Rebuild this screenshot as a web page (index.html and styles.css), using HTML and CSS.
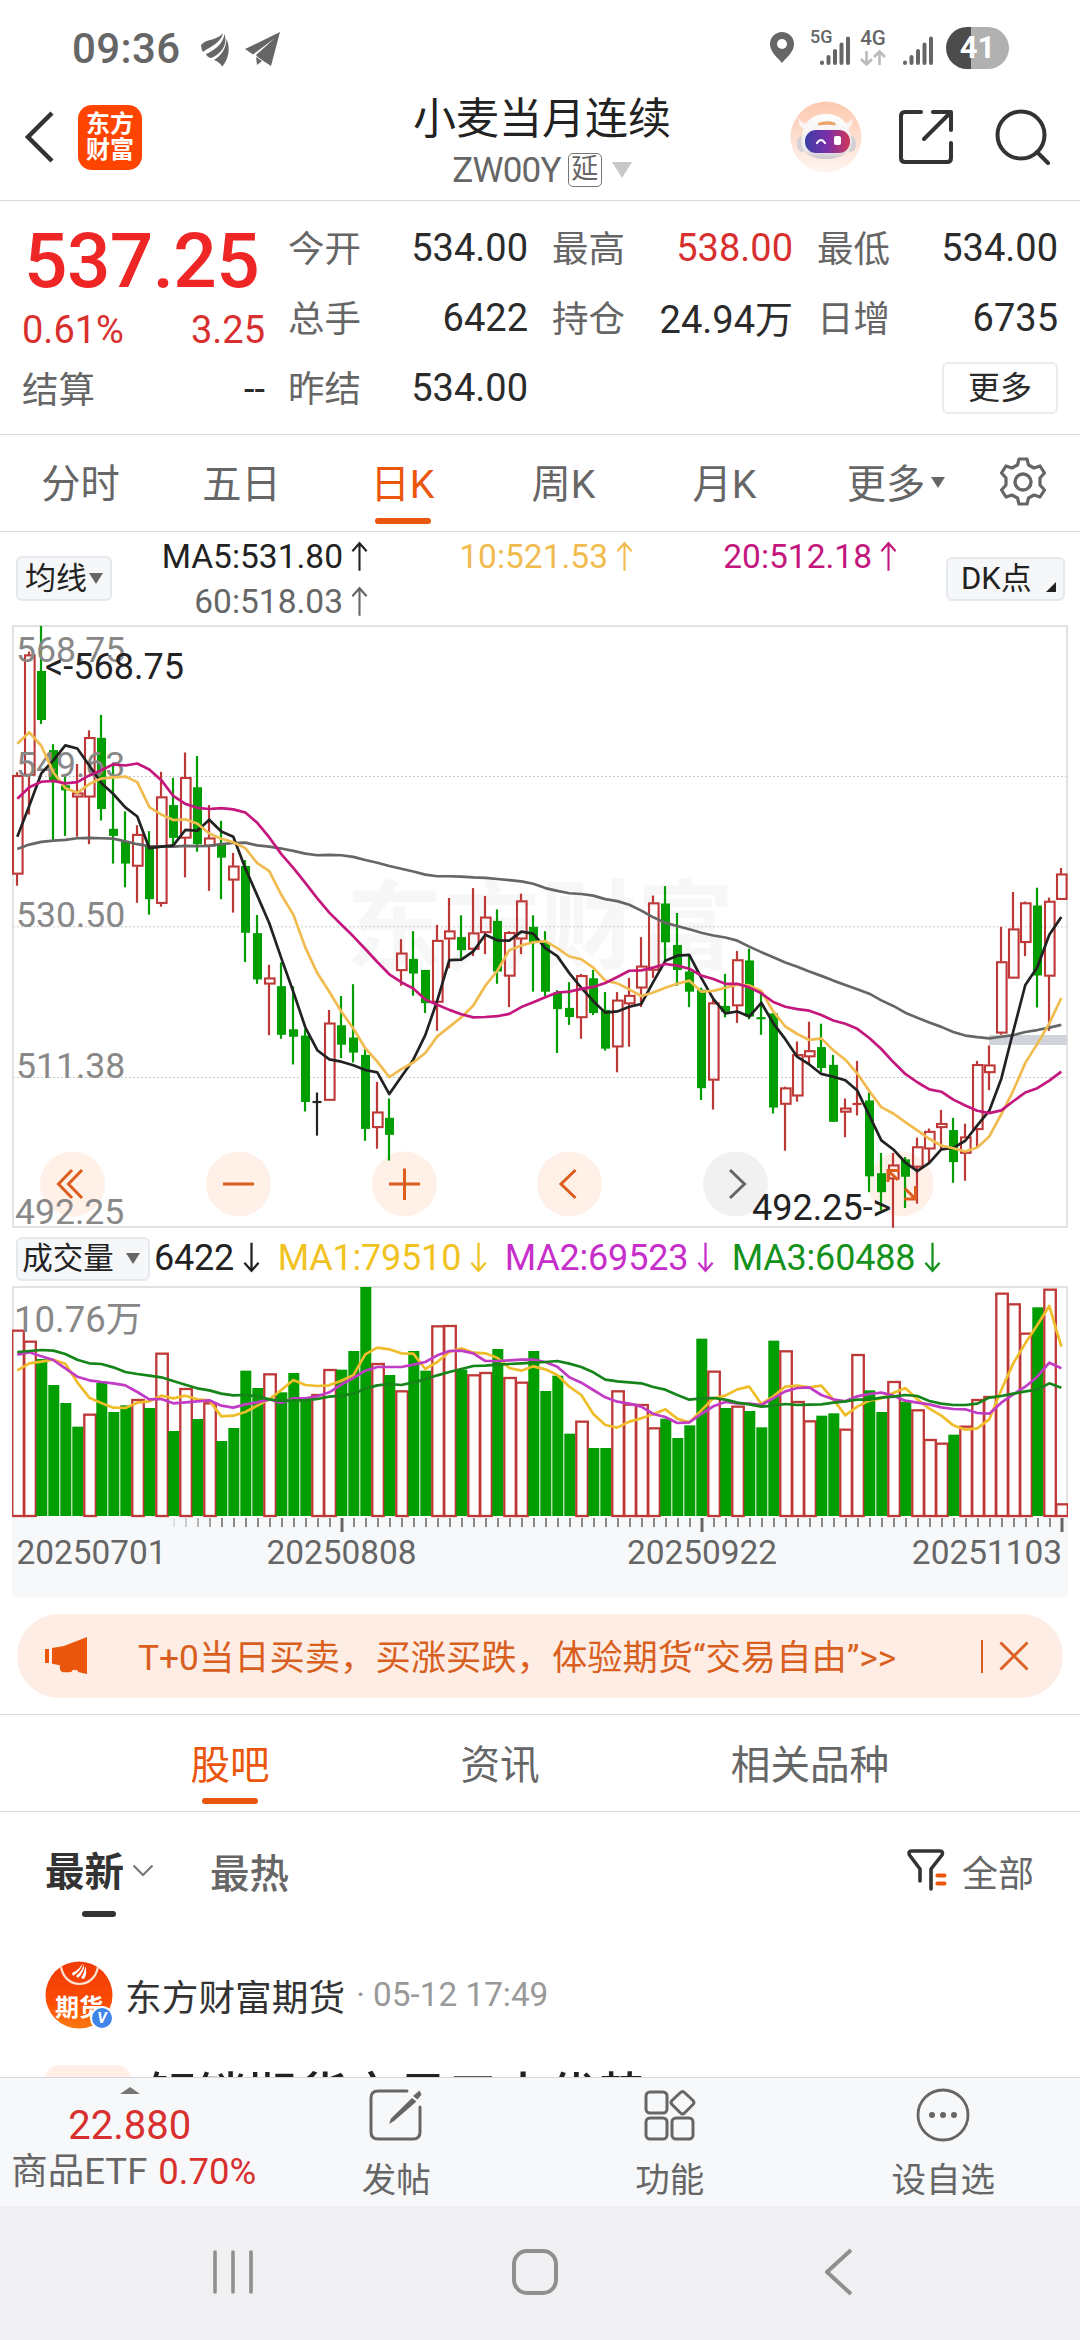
FILE: index.html
```html
<!DOCTYPE html>
<html lang="zh-CN">
<head>
<meta charset="utf-8">
<title>小麦当月连续 ZW00Y</title>
<link rel="stylesheet" href="styles.css">
</head>
<body>
<svg class="defs" width="0" height="0">
  <symbol id="up" viewBox="0 0 20 32"><path d="M10 31V2M2.5 10.500L10 2l7.500 8.500" fill="none" stroke="currentColor" stroke-width="2.200"/></symbol>
  <symbol id="down" viewBox="0 0 20 32"><path d="M10 0v29M2.500 21L10 29.500l7.500-8.500" fill="none" stroke="currentColor" stroke-width="2.400"/></symbol>
  <symbol id="signal" viewBox="0 0 32 30"><path d="M3 26.500v.5M9.500 21v6M16 15v12M22.500 8.500v18.500M29 2.500v24.500" fill="none" stroke="#666" stroke-width="4" stroke-linecap="round"/></symbol>
</svg>

<header class="status">
  <span class="clock">09:36</span>
  <svg class="st-wing" width="28" height="34" viewBox="0 0 28 34"><path d="M0 12C6 5 16 8 22 0C20 10 10 13 2 19Q0 16 0 12ZM5 21C14 17 22 11 23.500 1C27 12 20 21 10 25Q6 24 5 21ZM13 27C21 22 25 15 25.500 6C30 16 27 27 21 33.500Q19 29 13 27Z" fill="#666"/></svg>
  <svg class="st-plane" width="36" height="36" viewBox="0 0 36 36"><path d="M35 1L0 18l8 5.500L30 7L11 24l1.500 2L26 35ZM11 26l1 8 5-4Z" fill="#666"/></svg>
  <span class="grow"></span>
  <svg class="st-pin" width="26" height="32" viewBox="0 0 26 32"><path d="M13 0a12 12 0 0 1 12 12c0 8-8 14-12 19C9 26 1 20 1 12A12 12 0 0 1 13 0Zm0 7a5 5 0 1 0 0 10a5 5 0 0 0 0-10Z" fill="#666"/></svg>
  <span class="sim"><b class="g5">5G</b><svg width="32" height="30"><use href="#signal"/></svg></span>
  <span class="net"><b>4G</b><svg width="26" height="16" viewBox="0 0 26 16"><path d="M6.500 1v13M1 9l5.500 5.500L12 9M19.500 15V2M14 7l5.500-5.500L25 7" fill="none" stroke="#bbb" stroke-width="2.600"/></svg></span>
  <svg class="st-sig2" width="32" height="30"><use href="#signal"/></svg>
  <span class="battery">41</span>
</header>

<section class="head">
  <svg class="back" width="30" height="52" viewBox="0 0 30 52"><path d="M27 2L3 26l24 24" fill="none" stroke="#333" stroke-width="4.500"/></svg>
  <div class="logo"><span>东方</span><span>财富</span></div>
  <div class="titles">
    <h1>小麦当月连续</h1>
    <div class="code"><span>ZW00Y</span><i class="delay">延</i><i class="tri-pale"></i></div>
  </div>
  <svg class="robot" width="72" height="72" viewBox="0 0 72 72">
    <defs>
      <linearGradient id="rb" x1="0" y1="0" x2="0" y2="1"><stop offset="0" stop-color="#fcc9ae"/><stop offset=".55" stop-color="#fde0d2"/><stop offset="1" stop-color="#fff6f0"/></linearGradient>
      <linearGradient id="rf" x1="0" y1="0" x2="1" y2="0"><stop offset="0" stop-color="#3b3fa6"/><stop offset=".5" stop-color="#7a2fa8"/><stop offset="1" stop-color="#d0385a"/></linearGradient>
      <linearGradient id="rh" x1="0" y1="0" x2="0" y2="1"><stop offset="0" stop-color="#fff"/><stop offset=".8" stop-color="#ece8ea"/><stop offset="1" stop-color="#c9c4c8"/></linearGradient>
    </defs>
    <circle cx="36" cy="36" r="35.500" fill="url(#rb)"/>
    <path d="M9 17C8 24 11 28 18 30L24 20C17 24 11 23 9 17ZM62 17C63 24 60 28 54 30L47 20C54 24 60 23 62 17Z" fill="#fbf3f1"/>
    <ellipse cx="12" cy="43" rx="5" ry="8" fill="#d5d0d3"/><ellipse cx="61" cy="43" rx="5" ry="8" fill="#d5d0d3"/>
    <path d="M36 13C51 13 58 22 61 36C64 50 53 58 36 58S9 50 12 36C14 22 21 13 36 13Z" fill="url(#rh)"/>
    <path d="M28 22q8-3 17-.5l1 3q-9-1.500-18 0Z" fill="#e9a56a"/>
    <rect x="15" y="29" width="45" height="23" rx="11" fill="url(#rf)"/>
    <path d="M27 42q4-6 8 0" fill="none" stroke="#fff" stroke-width="2.200" stroke-linecap="round"/>
    <rect x="44" y="35" width="7" height="9" rx="2" fill="#fff"/>
  </svg>
  <svg class="share" width="54" height="56" viewBox="0 0 54 56"><path d="M22 3H6Q2 3 2 7V49Q2 53 6 53H48Q52 53 52 49V34M52 21V3H34M51 4L25 30" fill="none" stroke="#333" stroke-width="4" stroke-linecap="round" stroke-linejoin="round"/></svg>
  <svg class="search" width="56" height="56" viewBox="0 0 56 56"><circle cx="26" cy="26" r="23.500" fill="none" stroke="#333" stroke-width="4"/><path d="M42 43L53 54" stroke="#333" stroke-width="4" stroke-linecap="round"/></svg>
</section>

<section class="quote">
  <div class="main">
    <div class="price">537.25</div>
    <div class="pair red chg"><span>0.61%</span><span>3.25</span></div>
    <div class="pair settle"><span class="lab">结算</span><span>--</span></div>
  </div>
  <div class="grid">
    <div class="pair"><span class="lab">今开</span><span>534.00</span></div>
    <div class="pair"><span class="lab">最高</span><span class="red">538.00</span></div>
    <div class="pair"><span class="lab">最低</span><span>534.00</span></div>
    <div class="pair"><span class="lab">总手</span><span>6422</span></div>
    <div class="pair"><span class="lab">持仓</span><span class="wan">24.94万</span></div>
    <div class="pair"><span class="lab">日增</span><span>6735</span></div>
    <div class="pair"><span class="lab">昨结</span><span>534.00</span></div>
    <div></div>
    <div class="more-cell"><button class="more">更多</button></div>
  </div>
</section>

<nav class="periods">
  <span>分时</span><span>五日</span><span class="on">日K</span><span>周K</span><span>月K</span><span class="drop">更多<i class="tri"></i></span>
  <svg class="gear" width="48" height="50" viewBox="0 0 48 50"><path d="M20 2h8l1.500 6 5.500 3 6-2 4.500 7-4.500 5v7l4.500 5-4.500 7-6-2-5.500 3-1.500 6h-8l-1.500-6-5.500-3-6 2-4.500-7 4.500-5v-7l-4.500-5 4.500-7 6 2 5.500-3Z" fill="none" stroke="#666" stroke-width="3.200" stroke-linejoin="round"/><circle cx="24" cy="25" r="8" fill="none" stroke="#666" stroke-width="3.400"/></svg>
</nav>

<section class="ma">
  <button class="chip">均线<i class="tri"></i></button>
  <div class="ma-grid">
    <span class="c5">MA5:531.80<svg class="arr"><use href="#up"/></svg></span>
    <span class="c10">10:521.53<svg class="arr"><use href="#up"/></svg></span>
    <span class="c20">20:512.18<svg class="arr"><use href="#up"/></svg></span>
    <span class="c60">60:518.03<svg class="arr"><use href="#up"/></svg></span>
  </div>
  <button class="chip dk">DK点<i class="corner"></i></button>
</section>

<svg class="chart" id="price" width="1056" height="603" viewBox="12 625 1056 603">
  <text x="346" y="961" class="wm">东方财富</text>
  <g fill="none" stroke="#c9c9c9" stroke-dasharray="2 2"><path d="M13 776.500H1067M13 926.800H1067M13 1077.500H1067"/></g>
  <rect x="13" y="626" width="1054" height="601" fill="none" stroke="#e2e2e2" stroke-width="2"/>
  <rect x="989" y="1035" width="78" height="10" fill="#d0d3d9"/>
  <g class="pads">
    <circle cx="72.500" cy="1184" r="32.500"/><circle cx="238.500" cy="1184" r="32.500"/><circle cx="404.500" cy="1184" r="32.500"/><circle cx="569.500" cy="1184" r="32.500"/><circle cx="735.500" cy="1184" r="32.500" class="off"/><circle cx="901" cy="1184" r="32.500"/>
  </g>
  <g id="candles"></g>
  <g class="axis"><text x="16" y="661.500">568.75</text><text x="16" y="777">549.63</text><text x="16" y="927">530.50</text><text x="16" y="1078">511.38</text><text x="15" y="1224">492.25</text></g>
  <g id="averages"></g>
  <g class="mark"><text x="45" y="679">&lt;-568.75</text><text x="752" y="1220">492.25-&gt;</text></g>
  <g class="glyphs">
    <path d="M72 1170L58.500 1184L72 1198M82 1170L68.500 1184L82 1198"/><path d="M223 1184H254"/><path d="M389 1184H420M404.500 1168.500V1200"/><path d="M575.500 1170L561 1184L575.500 1198"/><path class="off" d="M730 1170L744.500 1184L730 1198"/>
    <path d="M888 1182V1170.500H899M888.500 1171L898 1180M904 1199H915.500V1186M905 1188.500L915 1198.500"/>
  </g>
</svg>

<section class="vol-head">
  <button class="chip vol">成交量<i class="tri"></i></button>
  <span class="v0">6422<svg class="arr"><use href="#down"/></svg></span>
  <span class="v1">MA1:79510<svg class="arr"><use href="#down"/></svg></span>
  <span class="v2">MA2:69523<svg class="arr"><use href="#down"/></svg></span>
  <span class="v3">MA3:60488<svg class="arr"><use href="#down"/></svg></span>
</section>

<svg class="chart" id="volume" width="1056" height="311" viewBox="12 1286 1056 311">
  <rect x="12" y="1517" width="1056" height="80" fill="#f7f8fa"/>
  <path d="M13 1517V1287H1067V1517" fill="none" stroke="#e2e2e2" stroke-width="2"/>
  <g id="bars"></g>
  <g class="axis"><text class="peak" x="14" y="1332">10.76万</text></g>
  <g id="vol-averages"></g>
  <g id="ticks" fill="none" stroke="#8a8a8a" stroke-width="2"></g>
  <g class="dates"><text x="16.500" y="1563.500">20250701</text><text x="341.500" y="1563.500" text-anchor="middle">20250808</text><text x="702" y="1563.500" text-anchor="middle">20250922</text><text x="1062" y="1563.500" text-anchor="end">20251103</text></g>
</svg>

<section class="promo">
  <div class="banner">
    <svg width="44" height="38" viewBox="0 0 44 38"><path d="M1 12h4v14H1ZM8 11l12-2L43 0v37l-9-2v-1.500l-5-.8q-1 3-5 2.500h-5q-4-1-3-7l-8-1.500Z" fill="#e9560c"/></svg>
    <span>T+0当日买卖，买涨买跌，体验期货“交易自由”&gt;&gt;</span>
    <i class="bar"></i>
    <svg class="close" width="30" height="30" viewBox="0 0 30 30"><path d="M1.500 1.500L28.500 28.500M28.500 1.500L1.500 28.500" stroke="#dd6325" stroke-width="3"/></svg>
  </div>
</section>

<nav class="sections"><span class="on">股吧</span><span>资讯</span><span>相关品种</span></nav>

<main class="feed">
  <div class="sort">
    <span class="new">最新</span>
    <svg class="chev" width="22" height="13" viewBox="0 0 22 13"><path d="M1.500 1.500L11 11l9.500-9.500" fill="none" stroke="#777" stroke-width="2.200"/></svg>
    <span class="hot">最热</span>
    <span class="grow"></span>
    <svg class="filter" width="42" height="43" viewBox="0 0 42 43"><path d="M13 32V20L2.500 6Q1 2 4.500 2H33Q36.500 2 35 6L24 20V40" fill="none" stroke="#333" stroke-width="3.600" stroke-linecap="round" stroke-linejoin="round"/><path d="M30.500 26.500h7M30.500 34.500h7" stroke="#e9560c" stroke-width="4.200" stroke-linecap="round"/></svg>
    <span class="all">全部</span>
  </div>
  <div class="author">
    <div class="avatar">
      <svg width="68" height="68" viewBox="0 0 68 68"><defs><linearGradient id="av" x1="0" y1="0" x2="0" y2="1"><stop offset="0" stop-color="#f03a06"/><stop offset=".6" stop-color="#fb4b04"/><stop offset="1" stop-color="#f97a10"/></linearGradient></defs><circle cx="34" cy="34" r="33.500" fill="url(#av)"/><path d="M16 6C18 17 26 23 34.500 23S51 17 53 6" fill="none" stroke="#ffe2d4" stroke-width="2.200"/><path d="M27 12Q34 9 38 2Q36 10 28 15ZM31 15Q38 9 39 3Q40 10 33 17ZM36 17Q40 11 40 5Q43 12 39 18Z" fill="#fff"/></svg>
      <span>期货</span><b>V</b>
    </div>
    <span class="name">东方财富期货</span><span class="time">· 05-12 17:49</span>
  </div>
  <div class="post"><i class="tag"></i><span>解锁期货交易三大优势</span></div>
</main>

<footer class="tools">
  <div class="etf"><i class="tri-up"></i><span class="etf-v">22.880</span><span class="etf-n">商品ETF <em>0.70%</em></span></div>
  <div class="tool"><svg width="54" height="54" viewBox="0 0 54 54"><path d="M38 3H9Q2 3 2 10V44Q2 51 9 51H44Q51 51 51 44V19" fill="none" stroke="#666" stroke-width="3" stroke-linecap="round"/><path d="M50.500 2.500l2 4-4 5-4.500-3.500ZM43 10l4.500 3.500L25 33l-5 3 2-5.500Z" fill="#666"/></svg><span>发帖</span></div>
  <div class="tool"><svg width="54" height="54" viewBox="0 0 54 54"><g fill="none" stroke="#666" stroke-width="3"><rect x="3" y="4" width="21" height="21" rx="4"/><rect x="3" y="30" width="21" height="21" rx="4"/><rect x="29" y="30" width="21" height="21" rx="4"/><path d="M37.500 4.500Q39.500 2.500 41.500 4.500L50 12.500Q52 14.500 50 16.500L41.500 25Q39.500 27 37.500 25L29 16.500Q27 14.500 29 12.500Z"/></g></svg><span>功能</span></div>
  <div class="tool"><svg width="54" height="54" viewBox="0 0 54 54"><circle cx="27" cy="27" r="25" fill="none" stroke="#666" stroke-width="2.800"/><circle cx="16" cy="27" r="3" fill="#666"/><circle cx="27" cy="27" r="3" fill="#666"/><circle cx="38" cy="27" r="3" fill="#666"/></svg><span>设自选</span></div>
</footer>

<footer class="android">
  <svg width="44" height="44" viewBox="0 0 44 44"><path d="M4 2v40M22 2v40M40 2v40" stroke="#8f8f8f" stroke-width="3.600" stroke-linecap="round"/></svg>
  <svg width="48" height="48" viewBox="0 0 48 48"><rect x="3" y="3" width="42" height="42" rx="13" fill="none" stroke="#8f8f8f" stroke-width="4"/></svg>
  <svg width="32" height="48" viewBox="0 0 32 48"><path d="M28 2L4 24l24 22" fill="none" stroke="#8f8f8f" stroke-width="4" stroke-linejoin="round"/></svg>
</footer>
<script src="chart.js"></script>
</body>
</html>
```
FILE: styles.css
```css
* { box-sizing: border-box; margin: 0; padding: 0; }
body { width: 1080px; height: 2340px; overflow: hidden; background: #fff; color: #2b2b2b; font-family: Roboto, "Noto Sans CJK SC", sans-serif; display: flex; flex-direction: column; }
body > * { flex: none; }
svg { display: block; flex: none; }
i, em { font-style: normal; }
button { font: inherit; color: inherit; }
.defs { position: absolute; }
.grow { flex: 1; }
.red { color: #d8302f; }

.status { height: 96px; padding: 0 72px; display: flex; align-items: center; color: #666; }
.clock { font-size: 42px; font-weight: 500; letter-spacing: .4px; width: 108px; white-space: nowrap; }
.st-wing { margin: 4px 16px 0 21px; }
.st-plane { margin-top: 2px; }
.st-pin { margin-right: 15px; }
.sim { display: flex; width: 42px; height: 36px; align-items: flex-end; }
.sim .g5 { font-size: 18px; font-weight: 500; align-self: flex-start; margin: -4px -12px 0 0; width: 22px; }
.sim svg { margin-left: -1px; }
.net { display: flex; flex-direction: column; align-items: center; margin: -2px 16px 0 8px; width: 26px; gap: 2px; }
.net b { font-size: 20.500px; line-height: 19px; font-weight: 500; }
.st-sig2 { margin: 6px 12px 0 0; }
.battery { width: 63px; height: 42px; border-radius: 21px; background: linear-gradient(90deg, #4c4c4c 40%, #b0b0b0 40%); color: #fff; font: 700 31px/42px Roboto, sans-serif; text-align: center; margin-right: -1px; }

.head { height: 105px; border-bottom: 1.500px solid #d9d9d9; display: flex; align-items: center; padding-left: 25px; }
.back { margin-top: -22px; }
.logo { width: 64px; height: 65px; margin: -22px 0 0 23px; border-radius: 14px; background: #ff4400; color: #fff; font-weight: 700; font-size: 24px; line-height: 26px; display: flex; flex-direction: column; align-items: center; justify-content: center; }
.titles { width: 510px; margin: -16px 0 0 145px; display: flex; flex-direction: column; align-items: center; }
h1 { font-size: 43px; line-height: 54px; font-weight: 400; color: #222; }
.code { height: 36px; margin-top: 6px; display: flex; align-items: center; font-size: 35px; color: #666; letter-spacing: -.8px; }
.delay { width: 34px; height: 34px; border: 1.500px solid #777; border-radius: 5px; font-size: 27px; line-height: 30px; margin: -1px 10px 0 7px; letter-spacing: 0; text-align: center; }
.tri-pale { border: 10.500px solid transparent; border-top: 16px solid #c8c8c8; border-bottom: 0; }
.robot { margin: -22px 37px 0 -7px; }
.share { margin: -22px 42px 0 0; }
.search { margin-top: -22px; }

.quote { height: 234px; border-bottom: 1.500px solid #d9d9d9; display: flex; font-size: 38px; }
.main { margin-left: 22px; width: 243px; padding-top: 17px; }
.price { font-size: 76.500px; line-height: 86px; font-weight: 500; color: #ee2626; letter-spacing: -.6px; padding-left: 2px; }
.pair { display: flex; justify-content: space-between; align-items: center; white-space: nowrap; }
.chg { height: 52px; }
.settle { height: 66px; }
.lab { color: #666; font-size: 36.500px; margin-top: -3px; }
.wan { margin-top: -3px; }
.grid { display: grid; grid-template-columns: 240px 241px 241px; column-gap: 24px; grid-template-rows: repeat(3, 70px); margin: 12px 0 0 23px; }
.more-cell { display: flex; justify-content: flex-end; align-items: center; }
.more { width: 116px; height: 52px; border: 2px solid #e9ebed; border-radius: 6px; background: #fff; font-size: 32px; line-height: 44px; }

.periods { height: 97px; border-bottom: 1.500px solid #d9d9d9; display: flex; align-items: center; font-size: 39.300px; color: #666; }
.periods span { width: 161px; height: 94px; line-height: 99px; text-align: center; position: relative; }
.on { color: #e9560c; }
.on::after { content: ""; position: absolute; left: 50%; bottom: 6px; width: 56px; height: 6px; margin-left: -28px; border-radius: 3px; background: #e9560c; }
.tri { display: inline-block; border: 7px solid transparent; border-top: 11.500px solid #666; border-bottom: 0; vertical-align: 10px; }
.periods .drop { width: 182px; }
.drop .tri { margin-left: 6px; }
.gear { margin: -2px 0 0 12px; }

.ma { height: 93px; display: flex; align-items: flex-start; padding: 24px 0 0 16px; }
.chip { height: 45px; border: 2px solid #e5e8ec; border-radius: 6px; background: #f6f7f9; width: 96px; font-size: 31px; display: flex; align-items: center; justify-content: center; line-height: 40px; color: #222; }
.chip .tri { margin-left: 2px; }
.ma-grid { display: grid; grid-template-columns: 257px 265px 264px; grid-template-rows: 45px 45px; margin-top: -22px; font-size: 33.500px; }
.ma-grid span { display: flex; align-items: center; justify-content: flex-end; white-space: nowrap; }
.ma-grid .arr { width: 19px; height: 31px; margin-left: 7px; }
.c5 { color: #222; } .c10 { color: #f0bb4f; } .c20 { color: #c4177d; } .c60 { color: #666; }
.dk { margin-left: 48px; width: 119px; height: 44px; margin-top: 1px; justify-content: flex-start; padding-left: 13px; }
.corner { border: 5.500px solid #222; border-top-color: transparent; border-left-color: transparent; margin: 16px 0 0 14px; }

.chart { margin-left: 12px; }
.wm { font: 700 97px "Noto Sans CJK SC", sans-serif; fill: #f7f7f7; }
.axis text { font-size: 35.600px; fill: #888; }
.axis .peak { font-size: 36.500px; }
.mark text { font-size: 36px; fill: #222; }
.pads circle { fill: #fff0e8; } .pads .off { fill: #f1f1f1; }
.glyphs path { fill: none; stroke: #dd5d1c; stroke-width: 3; } .glyphs .off { stroke: #666; }
.dates text { font-size: 33.400px; fill: #666; }

.vol-head { height: 58px; padding-left: 16px; display: flex; align-items: center; font-size: 36px; }
.vol { width: 134px; height: 44px; font-size: 30.500px; margin: 3px 4px 0 0; padding-right: 4px; }
.vol .tri { margin-left: 12px; }
.vol-head span { display: flex; align-items: center; white-space: nowrap; padding-top: 2px; letter-spacing: -.2px; margin-right: 16.500px; }
.vol-head .arr { width: 19px; height: 32px; margin-left: 8px; }
.v0 { color: #222; } .v1 { color: #f0c322; } .v2 { color: #c72fcb; } .v3 { color: #15921b; }

.promo { height: 118px; padding: 17px 17px 0; border-bottom: 1.500px solid #d9d9d9; }
.banner { height: 84px; border-radius: 42px; background: #fdede4; display: flex; align-items: center; padding-left: 27px; color: #d95f1e; font-size: 35.300px; white-space: nowrap; }
.banner span { margin: -4px 0 0 50px; width: 840px; }
.bar { width: 1.500px; height: 33px; margin: 0 16px 0 3px; background: #d95f1e; }

.sections { height: 97px; border-bottom: 1.500px solid #d9d9d9; display: flex; padding-left: 95px; font-size: 39.600px; color: #666; }
.sections span { width: 270px; height: 97px; line-height: 102px; text-align: center; position: relative; }
.sections span:last-child { width: 350px; }
.sections .on { color: #e9560c; }
.sections .on::after { bottom: 8px; }

.feed { height: 265px; overflow: hidden; }
.sort { height: 122px; display: flex; align-items: center; padding: 0 46px 0 45px; font-size: 39.500px; color: #666; }
.new { font-weight: 700; color: #333; position: relative; line-height: 60px; }
.new::after { content: ""; position: absolute; left: 37px; bottom: -14px; width: 34px; height: 6px; border-radius: 3px; background: #333; }
.chev { margin: -6px 56px 0 8px; }
.hot { font-weight: 500; margin-top: -6px; }
.filter { margin: -6px 13px 0 0; }
.all { font-size: 36px; margin-top: -5px; }
.author { display: flex; align-items: center; padding: 26px 0 0 45px; height: 95px; }
.avatar { width: 68px; height: 68px; position: relative; }
.avatar span { position: absolute; left: 10px; top: 30px; font: 700 24px/30px "Noto Sans CJK SC", sans-serif; color: #fff; }
.avatar b { position: absolute; right: -1px; bottom: -1px; width: 24px; height: 24px; border: 2px solid #fff; border-radius: 50%; background: #3f85e8; color: #fff; font: italic 700 15px/20px Roboto, sans-serif; text-align: center; }
.name { font-size: 36.700px; margin: 0 11px 0 12px; color: #333; }
.time { font-size: 33.300px; color: #999; }
.post { display: flex; padding: 36px 0 0 45px; }
.tag { width: 86px; height: 60px; border-radius: 14px; background: #ffeee6; }
.post span { margin: 2px 0 0 15px; font-size: 50.300px; line-height: 60px; font-weight: 500; color: #222; white-space: nowrap; }

.tools { height: 129px; border-top: 1.500px solid #d5d7da; background: #f7f8fa; display: flex; color: #666; }
.etf { width: 260px; display: flex; flex-direction: column; align-items: center; white-space: nowrap; }
.tri-up { border: 10px solid transparent; border-bottom: 7px solid #777; border-top: 0; margin-top: 9px; }
.etf-v { font-size: 40px; line-height: 44px; margin-top: 10px; color: #d8302f; }
.etf-n { font-size: 36.500px; line-height: 44px; margin: 2px 0 0 8px; }
.etf em { color: #d8302f; margin-left: 2px; }
.tool { width: 274px; display: flex; flex-direction: column; align-items: center; padding-top: 10px; font-size: 34.500px; gap: 13px; line-height: 50px; }

.android { height: 135px; background: #f0f0f2; display: grid; grid-template-columns: 466px 138px 470px; justify-items: center; align-items: start; padding-top: 42px; }
.android svg:first-child { margin-top: 2px; }
```
FILE: chart.js
```js
// Each candle: direction, high, body top, body bottom, low.
const candles = `r 385 393 643 672|r 80 88 393 492|g 15 129 253 263|g 314 329 410 556|g 395 418 431 546|r 364 437 448 548|r 279 297 448 567|g 240 298 478 507|g 366 528 546 616|g 484 560 616 676|r 519 542 623 715|g 534 570 706 745|r 384 447 717 725|g 399 468 551 570|r 335 398 552 651|g 344 423 567 586|r 468 551 572 685|g 508 567 601 706|r 589 622 658 740|g 607 622 791 865|g 746 792 909 920|r 872 905 921 1050|g 866 926 1049 1059|g 926 1035 1054 1124|g 1035 1051 1219 1243|k 1195 1219 1219 1304|r 986 1019 1215 1215|g 951 1025 1074 1108|g 921 1056 1094 1119|g 1085 1100 1287 1317|r 1168 1244 1284 1337|g 1210 1259 1302 1367|r 807 842 887 925|g 787 857 894 950|g 885 885 969 994|r 771 810 967 1039|r 703 786 807 881|g 747 802 835 856|r 678 791 833 850|r 698 751 791 845|g 732 761 889 920|r 787 790 901 979|r 692 710 807 845|g 747 776 817 940|g 787 815 940 951|g 936 942 984 1095|g 916 981 1004 1024|r 895 899 1006 1059|g 885 906 994 999|g 941 986 1084 1089|r 941 961 1080 1144|r 905 949 971 1079|r 802 875 931 979|r 697 715 886 905|g 673 717 815 867|g 741 822 885 925|g 850 889 940 979|g 930 935 1184 1214|r 960 968 1164 1238|g 895 976 991 1005|r 837 859 976 1019|g 831 861 1003 1010|g 936 1007 1009 1049|g 995 995 1233 1248|r 1180 1183 1225 1342|r 1066 1099 1204 1218|r 1016 1089 1105 1125|g 1021 1080 1133 1143|g 1100 1125 1269 1269|r 1210 1234 1245 1308|r 1115 1224 1226 1253|g 1195 1215 1407 1447|g 1348 1399 1447 1493|r 1348 1378 1414 1537|g 1358 1364 1408 1487|r 1309 1332 1384 1476|r 1286 1293 1338 1371|r 1239 1273 1284 1338|g 1259 1290 1371 1423|r 1274 1307 1349 1418|r 1115 1124 1289 1335|r 1076 1125 1145 1189|r 776 864 1045 1049|r 688 781 906 906|r 712 715 816 850|g 677 722 899 980|r 702 711 901 1039|r 627 642 707 707`.split('|').map(s => s.split(' '));

const priceMA = {
  '#666': '579 568 561 558 556 552 551 552 553 560 567 572 573 573 571 572 571 567 564 563 570 573 578 584 591 595 594 595 599 607 614 622 629 636 644 648 648 649 651 652 655 658 661 667 678 685 691 693 697 706 711 720 735 752 766 774 782 791 798 803 811 826 840 853 866 877 889 900 912 923 934 945 962 976 993 1006 1018 1029 1042 1051 1055 1058 1054 1050 1042 1037 1031 1024',
  '#222': '548 470 388 355 317 325 368 412 440 474 497 577 573 570 531 533 505 535 548 628 697 767 855 940 1030 1088 1111 1117 1126 1138 1144 1199 1155 1112 1050 962 860 859 838 796 810 811 788 793 830 850 893 930 964 993 990 978 971 915 862 849 847 905 958 995 990 1003 968 1020 1060 1105 1124 1148 1155 1164 1190 1253 1316 1339 1372 1394 1373 1339 1335 1317 1278 1241 1160 1040 923 878 796 751',
  '#f0bb4f': '313 284 318 385 425 437 415 401 398 396 410 473 492 506 504 515 540 553 562 577 615 635 695 745 828 893 940 990 1033 1083 1117 1156 1136 1119 1095 1053 1029 1005 975 925 887 835 823 815 812 830 851 858 879 912 919 934 951 942 930 920 912 940 938 930 922 924 938 990 1028 1047 1062 1058 1088 1112 1147 1191 1232 1248 1270 1291 1312 1329 1336 1344 1334 1306 1250 1190 1120 1072 1020 956',
  '#c4177d': '452 423 409 407 413 410 393 380 365 368 363 378 405 445 465 475 478 476 479 487 513 550 592 627 665 704 740 770 800 832 865 896 916 932 960 973 986 997 1005 1004 1002 996 979 967 954 942 940 933 928 918 903 887 886 879 870 874 882 899 908 920 920 929 944 966 978 984 988 999 1013 1021 1034 1057 1085 1118 1148 1169 1187 1193 1213 1228 1241 1247 1240 1217 1195 1184 1165 1142'
};

const volumes = 'r299 r332 g387 g465 g519 g590 r551 g459 g546 g526 r507 g534 r368 g603 r474 g567 r517 g633 g594 g422 g474 r430 g487 g429 g508 r492 r417 g419 g363 g171 r399 g435 r481 g363 g422 r286 r285 g419 r433 r426 g357 r441 r455 g363 g483 g437 g611 r572 g654 g654 r481 r521 r522 r592 g566 g624 g586 g326 r422 g534 r527 g543 g592 g332 r361 r513 r571 g557 g550 r596 r372 g481 g546 r453 g515 r538 r627 r638 g614 r587 r507 r498 r188 r220 r308 g232 r176 r820'.split(' ');

const volumeMA = {
  '#f0bd2a': '421 400 395 389 401 457 503 519 533 534 518 514 497 505 497 508 511 559 557 546 527 508 480 450 465 468 466 452 436 373 353 358 370 371 417 396 366 355 368 370 383 414 422 409 418 435 470 495 552 585 593 575 565 553 538 566 577 541 505 497 478 470 522 499 470 467 472 467 508 556 530 512 505 489 474 508 536 557 586 599 595 568 480 400 340 285 228 350',
  '#c13bc4': '374 367 379 390 415 440 451 456 460 466 486 508 507 520 517 514 511 527 533 523 517 508 519 505 505 499 487 464 444 422 411 411 411 404 396 376 363 362 370 393 393 391 389 389 396 410 442 458 480 502 515 521 530 552 561 579 577 552 529 516 520 521 525 505 484 474 472 495 508 514 499 492 488 497 512 518 523 532 537 538 549 551 518 493 470 440 398 415',
  '#15851a': '366 363 360 362 372 389 400 402 412 426 432 437 442 453 464 475 481 491 496 495 499 508 513 511 511 507 500 497 491 476 466 462 465 457 448 436 426 417 408 407 404 402 400 398 396 393 401 411 427 449 454 457 460 471 479 495 509 505 504 509 518 523 530 527 522 525 524 523 518 514 509 509 503 500 495 498 513 521 525 525 521 503 498 491 484 479 460 473'
};

const ink = { r: '#bd3836', g: '#009e00', k: '#222' };
const xAt = i => 17.3 + 12 * i;
const priceY = v => 620 + v / 2.529;
const volumeY = v => 1230 + v / 3;
const put = (id, html) => { document.getElementById(id).innerHTML = html; };

put('candles', candles.map(([kind, ...v], i) => {
  const [high, top, bottom, low] = v.map(n => priceY(+n));
  const x = xAt(i) - .3, c = ink[kind];
  const wick = (a, b) => b > a ? `<path d="M${x} ${a}V${b}" stroke="${c}" stroke-width="2.200"/>` : '';
  if (kind === 'k' || bottom - top < 1)
    return wick(high, low) + `<path d="M${x - 4.5} ${top}h9" stroke="${c}" stroke-width="2.200"/>`;
  if (kind === 'g')
    return wick(high, low) + `<rect x="${x - 4}" y="${top}" width="9" height="${bottom - top}" fill="${c}"/>`;
  return wick(high, top) + wick(bottom, low) +
    `<rect x="${x - 4}" y="${top + 0.6}" width="9.600" height="${Math.max(bottom - top - 1.2, 2)}" fill="none" stroke="${c}" stroke-width="2.100"/>`;
}).join(''));

put('bars', volumes.map((s, i) => {
  const x = xAt(i), y = volumeY(+s.slice(1));
  return s[0] === 'g'
    ? `<rect x="${x - 5}" y="${y}" width="11" height="${1516 - y}" fill="${ink.g}"/>`
    : `<rect x="${x - 5}" y="${y + 1}" width="11.500" height="${1515 - y}" fill="#fff" stroke="${ink.r}" stroke-width="2.300"/>`;
}).join(''));

const lines = (set, y) => Object.entries(set).map(([color, list]) =>
  `<polyline fill="none" stroke="${color}" stroke-width="2.700" stroke-linejoin="round" points="${list.split(' ').map((v, i) => xAt(i) + ',' + y(+v)).join(' ')}"/>`).join('');
put('averages', lines(priceMA, priceY));
put('vol-averages', lines(volumeMA, volumeY));

let marks = '';
for (let i = 13; i < 88; i++) {
  const major = i === 27 || i === 57 || i === 87;
  const fade = i < 17 ? (i - 12) / 5 : 1;
  marks += `<path d="M${xAt(i) + .7} 1518v${major ? 14 : 9}" opacity="${fade}" ${major ? 'stroke="#666" stroke-width="3"' : ''}/>`;
}
put('ticks', marks);
```
